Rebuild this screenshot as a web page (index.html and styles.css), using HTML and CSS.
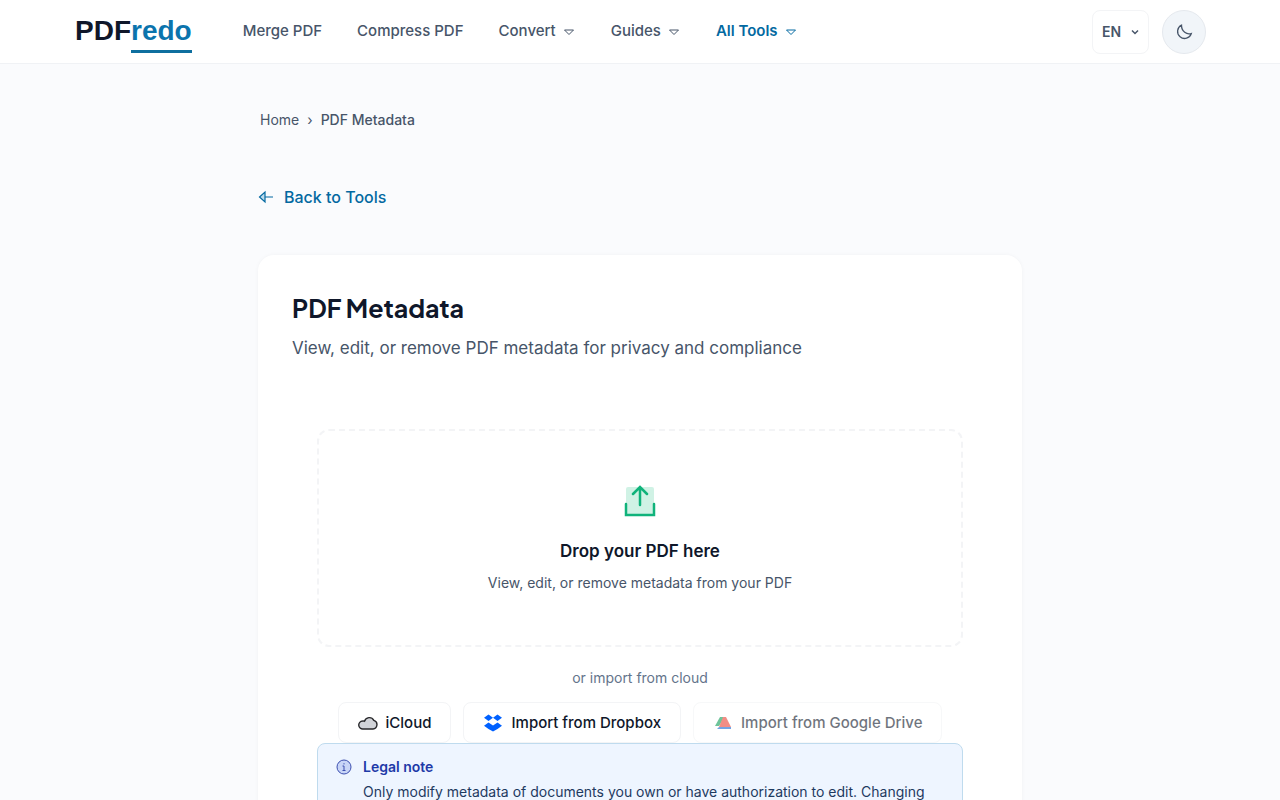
FILE: index.html
```
<!DOCTYPE html>
<html lang="en">

<head>
    <meta charset="UTF-8">
    <meta name="viewport" content="width=device-width, initial-scale=1.0">
    <title>PDF Metadata - PDFredo</title>
    <link rel="stylesheet" href="styles.css">
</head>

<body>
    <header class="site-header">
        <div class="header-inner">
            <a class="logo" href="#">PDF<span class="logo-accent">redo</span></a>
            <nav class="main-nav">
                <a href="#">Merge PDF</a>
                <a href="#">Compress PDF</a>
                <a href="#">Convert <svg class="caret" viewBox="0 0 14 14"><path d="M2.5 5h9L7 9.5z"/></svg></a>
                <a href="#">Guides <svg class="caret" viewBox="0 0 14 14"><path d="M2.5 5h9L7 9.5z"/></svg></a>
                <a class="active" href="#">All Tools <svg class="caret" viewBox="0 0 14 14"><path d="M2.5 5h9L7 9.5z"/></svg></a>
            </nav>
            <div class="header-tools">
                <div class="language">
                    <select aria-label="Language">
                        <option>EN</option>
                    </select>
                    <svg class="language-arrow" viewBox="0 0 10 10"><path d="M2 3.5l3 3 3-3"/></svg>
                </div>
                <button class="theme-toggle" type="button" aria-label="Dark mode">
                    <svg viewBox="0 0 18 18"><path d="M6.500 2.200a7 7 0 1 0 9.800 8.300c-4.500 1.600-9.800-2-9.800-8.300z"/></svg>
                </button>
            </div>
        </div>
    </header>

    <main class="page">
        <nav class="breadcrumb" aria-label="Breadcrumb">
            <a href="#">Home</a>
            <span class="separator">›</span>
            <span class="current">PDF Metadata</span>
        </nav>

        <a class="back-link" href="#">
            <svg viewBox="0 0 16 16"><path class="tint" d="M7 3v10L1.500 8z"/><path d="M7 3v10L1.500 8zM7 8h8"/></svg>
            Back to Tools
        </a>

        <section class="card">
            <h1>PDF Metadata</h1>
            <p class="subtitle">View, edit, or remove PDF metadata for privacy and compliance</p>

            <div class="tool">
                <label class="dropzone">
                    <input class="file-input" type="file" accept="application/pdf">
                    <svg class="upload-icon" viewBox="0 0 40 40">
                        <path class="upload-fill" d="M8 6h24a2 2 0 0 1 2 2v26H6V8a2 2 0 0 1 2-2z"/>
                        <path d="M6 23v11h28V23M20 24V7M13 13l7-7 7 7"/>
                    </svg>
                    <span class="drop-title">Drop your PDF here</span>
                    <span class="drop-text">View, edit, or remove metadata from your PDF</span>
                </label>

                <p class="cloud-label">or import from cloud</p>
                <div class="cloud-buttons">
                    <button type="button">
                        <svg class="icloud" viewBox="0 0 20 20"><path d="M5 16a4 4 0 0 1-.5-8q1-.2 2 .2A5 5 0 0 1 15.800 7.400 4.400 4.400 0 0 1 15 16z"/></svg>
                        iCloud
                    </button>
                    <button type="button">
                        <svg class="dropbox" viewBox="0 0 20 20"><path d="M5.500 1.500L10 4.700 5.500 7.900 1 4.700zM14.500 1.500L19 4.700l-4.500 3.200L10 4.700zM5.500 9.500L10 12.500l4.500-3L19 12.700l-4.500 3.300L10 18.500 5.500 16 1 12.700z"/></svg>
                        Import from Dropbox
                    </button>
                    <button type="button" disabled>
                        <svg viewBox="0 0 20 20"><path fill="#0f9d58" d="M7 4h5L6 13H2z"/><path fill="#ea4335" d="M10 4h3l5 10H6z"/><path fill="#1967d2" d="M6 14h12v2H4z"/></svg>
                        Import from Google Drive
                    </button>
                </div>

                <aside class="legal-note">
                    <svg viewBox="0 0 16 16"><circle cx="8" cy="8" r="7"/><path d="M6.500 7H8v4.500M6.500 11.500h3M8 4.200v1.200"/></svg>
                    <div>
                        <h2>Legal note</h2>
                        <p>Only modify metadata of documents you own or have authorization to edit. Changing</p>
                    </div>
                </aside>
            </div>
        </section>
    </main>
</body>

</html>
```
FILE: styles.css
```
* {
    box-sizing: border-box;
}

body {
    margin: 0;
    background-color: #fafbfd;
    color: #0f172a;
    font-family: Inter, "Liberation Sans", sans-serif;
    font-size: 16px;
    line-height: 24px;
}

a {
    color: inherit;
    text-decoration: none;
}

h1, h2, p {
    margin: 0;
}

button, select {
    font: inherit;
    cursor: pointer;
}

svg {
    fill: none;
    stroke: currentColor;
    flex-shrink: 0;
}

/* header */
.site-header {
    background-color: #fff;
    border-bottom: 1px solid #f0f2f5;
}

.header-inner {
    display: flex;
    align-items: center;
    max-width: 1180px;
    height: 63px;
    margin: 0 auto;
    padding: 0 24px;
}

.logo {
    margin-right: 51px;
    padding: 4px 0 0 1px;
    font-family: "Liberation Sans", Arial, sans-serif;
    font-size: 28px;
    font-weight: 700;
    line-height: 32px;
}

.logo-accent {
    display: inline-block;
    padding-bottom: 3px;
    border-bottom: 3px solid #0e6f9f;
    color: #0b74ad;
}

.main-nav {
    display: flex;
    gap: 35px;
    margin-bottom: 1px;
    color: #475569;
    font-size: 15px;
    font-weight: 500;
}

.main-nav a {
    display: flex;
    align-items: center;
    gap: 6px;
}

.main-nav .active {
    color: #0369a1;
    font-weight: 600;
}

.caret {
    width: 14px;
    height: 14px;
    margin-top: 2px;
}

.header-tools {
    display: flex;
    gap: 13px;
    margin-left: auto;
    color: #475569;
}

.language {
    position: relative;
}

.language select {
    width: 57px;
    height: 44px;
    padding: 0 9px;
    border: 1px solid #f3f4f6;
    border-radius: 8px;
    background-color: #fff;
    color: #475569;
    font-size: 14px;
    font-weight: 600;
    appearance: none;
}

.language-arrow {
    position: absolute;
    top: 17px;
    right: 9px;
    width: 10px;
    height: 10px;
    stroke-width: 1.5;
    pointer-events: none;
}

.theme-toggle {
    display: flex;
    align-items: center;
    justify-content: center;
    width: 44px;
    height: 44px;
    padding: 0;
    border: 1px solid #e5e9ee;
    border-radius: 50%;
    background-color: #f1f5f9;
    color: #475569;
}

.theme-toggle svg {
    width: 18px;
    height: 18px;
    stroke-width: 1.3;
}

/* page */
.page {
    max-width: 812px;
    margin: 0 auto;
    padding: 44px 24px;
}

.breadcrumb {
    display: flex;
    gap: 8px;
    padding-left: 2px;
    color: #475569;
    font-size: 14px;
}

.breadcrumb .current {
    font-weight: 500;
}

.back-link {
    display: inline-flex;
    align-items: center;
    gap: 10px;
    margin: 53px 0 46px;
    color: #0369a1;
    font-weight: 500;
}

.back-link svg {
    width: 16px;
    height: 16px;
    stroke-width: 1.2;
}

.tint {
    fill: #bfdced;
    stroke: none;
}

.card {
    padding: 35px 34px;
    border-radius: 16px;
    background-color: #fff;
    box-shadow: 0 0 4px rgba(15, 23, 42, 0.04);
}

.card h1 {
    font-family: "Plus Jakarta Sans", Inter, sans-serif;
    font-size: 25px;
    font-weight: 700;
    line-height: 36px;
}

.subtitle {
    margin-top: 10px;
    color: #475569;
    font-size: 17px;
}

.tool {
    padding: 69px 25px 0;
}

.dropzone {
    display: flex;
    flex-direction: column;
    align-items: center;
    padding: 50px 24px;
    border: 2px dashed #f3f4f6;
    border-radius: 12px;
    cursor: pointer;
}

.file-input {
    position: absolute;
    width: 1px;
    height: 1px;
    opacity: 0;
}

.upload-icon {
    width: 40px;
    height: 40px;
    color: #10b37b;
    stroke-width: 2.5;
    stroke-linecap: round;
}

.upload-fill {
    fill: #d0f2e5;
    stroke: none;
}

.drop-title {
    margin-top: 18px;
    font-size: 17px;
    font-weight: 600;
}

.drop-text {
    margin-top: 8px;
    color: #475569;
    font-size: 14px;
}

.cloud-label {
    margin: 19px 0 12px;
    color: #64748b;
    font-size: 14px;
    text-align: center;
}

.cloud-buttons {
    display: flex;
    justify-content: center;
    gap: 12px;
}

.cloud-buttons button {
    display: flex;
    align-items: center;
    gap: 8px;
    height: 41px;
    padding: 0 19px;
    border: 1px solid #f3f4f6;
    border-radius: 8px;
    background-color: #fff;
    color: #0f172a;
    font-size: 15px;
    font-weight: 500;
}

.cloud-buttons button:disabled {
    opacity: 0.6;
    cursor: default;
}

.cloud-buttons svg {
    width: 20px;
    height: 20px;
    stroke: none;
}

.cloud-buttons .icloud {
    fill: #d1d3d8;
    stroke: #27272a;
    stroke-width: 1.4;
}

.dropbox {
    fill: #0061ff;
}

.legal-note {
    display: flex;
    gap: 11px;
    padding: 11px 18px 18px;
    border: 1px solid #bfdbee;
    border-radius: 8px;
    background-color: #eef5ff;
    color: #1e3a5f;
    font-size: 14px;
}

.legal-note svg {
    width: 16px;
    height: 16px;
    margin-top: 4px;
    color: #3c4fb0;
}

.legal-note circle {
    fill: #c8d5f7;
}

.legal-note h2 {
    margin-bottom: 1px;
    color: #1e3aa8;
    font-size: 14px;
    font-weight: 600;
}
```
